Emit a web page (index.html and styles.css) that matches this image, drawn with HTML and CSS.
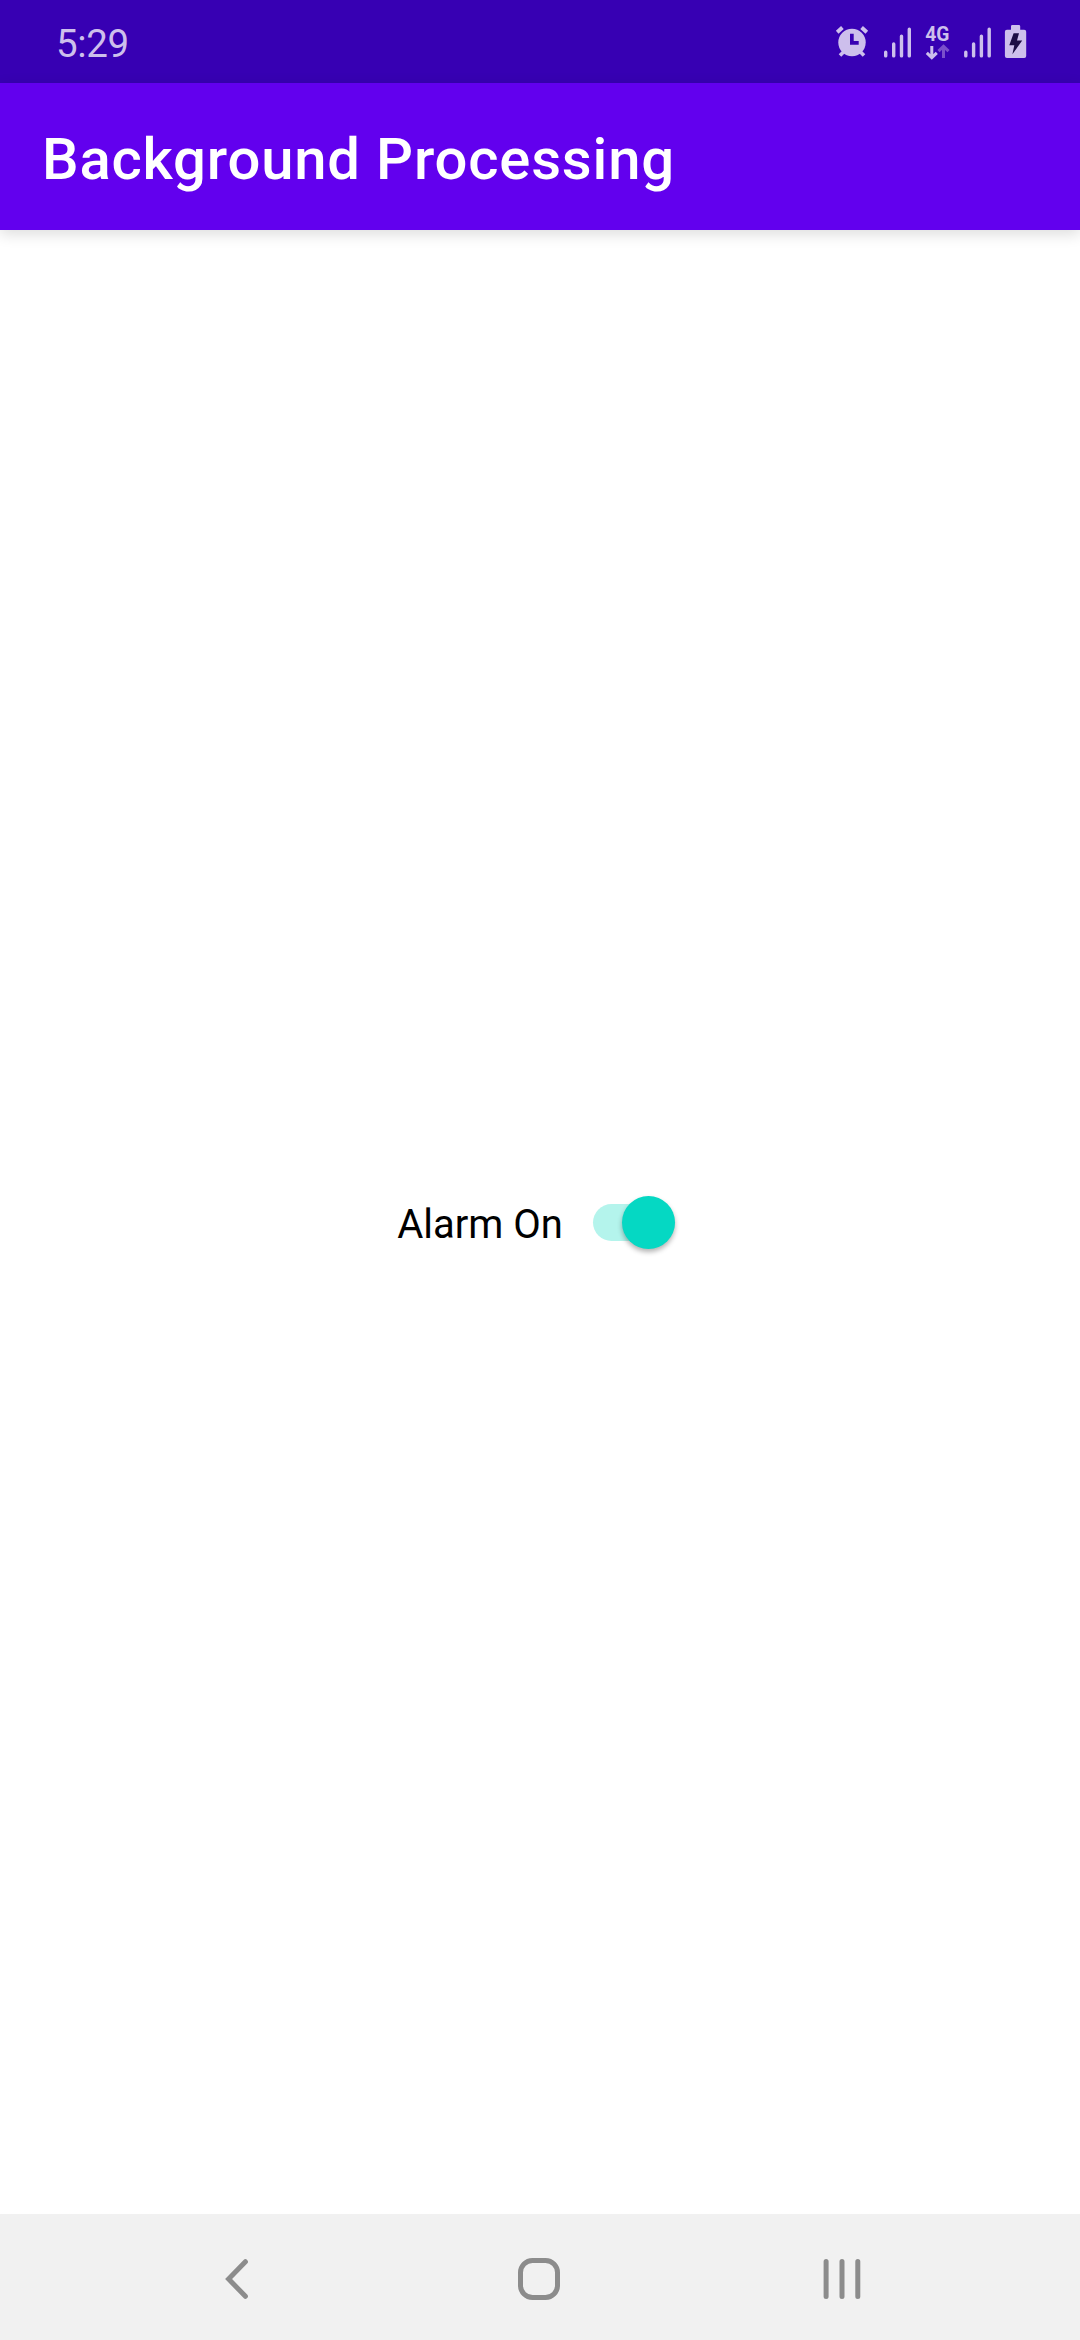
FILE: index.html
```html
<!DOCTYPE html>
<html lang="en">
<head>
<meta charset="utf-8">
<title>Background Processing</title>
<link rel="stylesheet" href="styles.css">
</head>
<body>
<div class="screen">
  <header class="status-bar">
    <time class="clock">5:29</time>
    <svg class="status-icons" viewBox="830 0 200 83" width="200" height="83" role="img" aria-label="Alarm, signal, 4G, battery charging">
      <g class="line">
        <path d="M837.2 32.2L842.4 27.6M861.6 27.6L866.8 32.2" stroke-width="4"/>
        <path d="M840 55.6L845 50.6M864 55.6L859 50.6" stroke-width="3.6"/>
      </g>
      <circle class="fill" cx="852" cy="42.5" r="13.7"/>
      <path class="hands" d="M850 33.7h3.7v7.3h5v3.7H850z"/>
      <g class="line" stroke-width="3.4" stroke-linecap="round">
        <path d="M885.7 52.2v3.7M893.7 44v11.9M901.5 36.2v19.7M909.3 29.2v26.7"/>
        <path d="M965.8 52.2v3.7M973.6 44v11.9M981.4 36.2v19.7M989.2 29.2v26.7"/>
      </g>
      <text class="network fill" x="925.3" y="41.2" textLength="24.2" lengthAdjust="spacingAndGlyphs">4G</text>
      <path class="line" stroke-width="3" d="M931.8 46V57.4M926.8 52.8L931.8 57.6L936.8 52.8"/>
      <path class="line idle" stroke-width="3" d="M943.5 58V46.6M938.5 51.2L943.5 46.4L948.5 51.2"/>
      <path class="fill" d="M1011 29.8v-3.500q0-1.300 1.300-1.300h6.600q1.300 0 1.300 1.300v3.500h4q2 0 2 2v24.200q0 2-2 2h-17.300q-2 0-2-2V31.800q0-2 2-2z"/>
      <path class="bolt" d="M1013.6 33.2h5.4l-2 7.4h5.2L1012.400 54.200l1.900-9H1009.300z"/>
    </svg>
  </header>
  <div class="app-bar"><h1 class="title">Background Processing</h1></div>
  <main class="content">
    <label class="alarm">
      <span class="alarm-label">Alarm On</span>
      <span class="track"><span class="thumb"></span></span>
    </label>
  </main>
  <nav class="nav-bar">
    <svg class="nav-icon" viewBox="0 0 60 60" width="60" height="60"><path d="M37.400 12.700L20.600 30L37.400 47.300" stroke-width="5" stroke-linecap="round"/></svg>
    <svg class="nav-icon" viewBox="0 0 60 60" width="60" height="60"><rect x="10.500" y="11.500" width="37" height="37" rx="12" stroke-width="5"/></svg>
    <svg class="nav-icon" viewBox="0 0 60 60" width="60" height="60"><path d="M14.100 12.500V47.500M30 12.500V47.500M45.800 12.500V47.500" stroke-width="5" stroke-linecap="round"/></svg>
  </nav>
</div>
</body>
</html>
```

FILE: styles.css
```css
body {
  margin: 0;
  font-family: Roboto, sans-serif;
}

.screen {
  width: 1080px;
  height: 2340px;
  display: flex;
  flex-direction: column;
  background: #fff;
  overflow: hidden;
}

.status-bar {
  height: 83px;
  flex: none;
  box-sizing: border-box;
  padding: 0 50px 0 56px;
  display: flex;
  justify-content: space-between;
  align-items: center;
  background: #3700b3;
  color: #cdbfec;
}

.clock {
  font-size: 38.5px;
  line-height: 46px;
  letter-spacing: -0.4px;
  padding-top: 4px;
}

.fill {
  fill: #cdbfec;
}

.line {
  fill: none;
  stroke: #cdbfec;
}

.idle {
  stroke: #7a4fcb;
}

.hands {
  fill: #3700b3;
}

.bolt {
  fill: #1c0d45;
}

.network {
  font-size: 20px;
  font-weight: 700;
}

.app-bar {
  height: 147px;
  flex: none;
  box-sizing: border-box;
  padding: 0 42px;
  display: flex;
  align-items: center;
  background: #6200ee;
  box-shadow: 0 4px 14px rgba(0, 0, 0, 0.14);
}

.title {
  margin: 0;
  padding-top: 4px;
  font-size: 58px;
  font-weight: 500;
  line-height: 68px;
  letter-spacing: 0.82px;
  color: #fff;
}

.content {
  flex: 1;
  display: flex;
  align-items: center;
  justify-content: center;
}

.alarm {
  display: flex;
  align-items: center;
  gap: 30px;
  padding-right: 8px;
}

.alarm-label {
  font-size: 40px;
  line-height: 48px;
  padding-top: 6px;
  color: #000;
}

.track {
  width: 82px;
  height: 37px;
  border-radius: 19px;
  background: #b4f4ec;
  display: flex;
  align-items: center;
  justify-content: flex-end;
}

.thumb {
  width: 53px;
  height: 53px;
  border-radius: 50%;
  background: #05d8c3;
  box-shadow: 0 3px 5px rgba(0, 0, 0, 0.3);
}

.nav-bar {
  height: 126px;
  flex: none;
  display: flex;
  justify-content: center;
  align-items: center;
  gap: 242px;
  padding-top: 4px;
  box-sizing: border-box;
  background: #f1f1f1;
}

.nav-icon {
  fill: none;
  stroke: #8c8c8c;
}
```
